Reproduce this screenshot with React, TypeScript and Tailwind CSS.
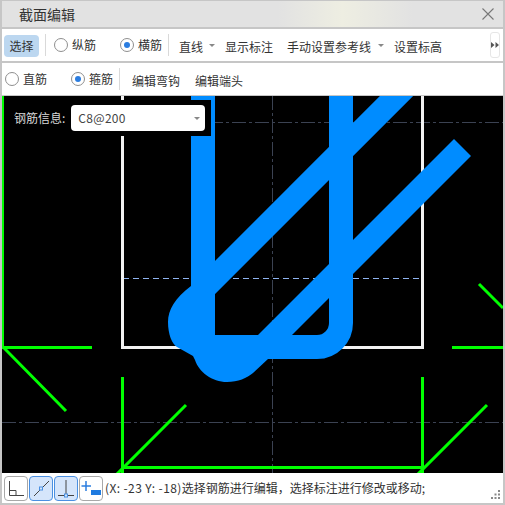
import React from "react";

const font = { fontFamily: '"Noto Sans CJK SC", "Liberation Sans", sans-serif' };

function Radio({ on, label, className = "" }: { on?: boolean; label: string; className?: string }) {
  return (
    <div className={`flex items-center gap-1 ${className}`}>
      <span className="flex h-[14px] w-[14px] items-center justify-center rounded-full border border-[#8f8f8f] bg-white">
        {on && <span className="h-[6px] w-[6px] rounded-full bg-[#2b7de0]" />}
      </span>
      <span className="text-[12px] text-[#333]">{label}</span>
    </div>
  );
}

const Sep = ({ className = "" }: { className?: string }) => <span className={`h-[22px] w-px bg-[#d9d9d9] ${className}`} />;
const Caret = ({ className = "" }: { className?: string }) => (
  <span className={`h-0 w-0 border-x-[3px] border-t-[3px] border-x-transparent border-t-[#888] ${className}`} />
);

function Canvas() {
  const green = "#00ff00";
  const blue = "#008cff";
  return (
    <svg viewBox="2 96 501 377" className="block h-full w-full" shapeRendering="crispEdges">
      <rect x="2" y="96" width="501" height="377" fill="#000" />
      <g stroke="#3b4252" strokeWidth="1" strokeDasharray="14 3 3 3" fill="none">
        <path d="M2 122.500H503" />
        <path d="M2 422.500H503" />
        <path d="M272.500 96V473" />
      </g>
      <path d="M123 278.500H423" stroke="#8fb4f0" strokeWidth="1" strokeDasharray="6 4" />
      <path d="M122.500 96V347.500H423M422.500 96V349" stroke="#f2f2f2" strokeWidth="3" fill="none" />
      <g stroke={green} fill="none">
        <path d="M3 96V347" strokeWidth="2" />
        <path d="M2 347.500H92M452 347.500H503M122.500 377V473M422.500 377V473M122 467.500H424" strokeWidth="3" />
        <path d="M3 347L66 411M479 284L503 308M186 405L116 475M487 405L417 475" strokeWidth="3" shapeRendering="auto" />
      </g>
      <g stroke={blue} fill="none" shapeRendering="auto">
        <path d="M203 96V335" strokeWidth="24" />
        <path d="M341 96V323A24 24 0 0 1 317 347H203" strokeWidth="24" />
        <path d="M205 287.500L425 67.500" strokeWidth="23.500" />
        <path d="M260 350L462.500 147.500" strokeWidth="24" />
        <path
          d="M191 286C175 298 168 310 168 322C168 334 172 344 177 347L193 356L195 360C199 372 212 382 227 382C238 382 247 378 253 373L268 359L258 335L215 335L215 295Z"
          fill={blue}
          stroke="none"
        />
      </g>
    </svg>
  );
}

function IconButton({ active, children }: { active?: boolean; children: React.ReactNode }) {
  return (
    <span
      className={`flex h-[25px] w-[24px] items-center justify-center rounded-[4px] border ${
        active ? "border-[#4a90e2] bg-[#d5e5fb]" : "border-[#a8a8a8] bg-white"
      }`}
    >
      <svg viewBox="0 0 22 23" className="h-[23px] w-[22px]" fill="none" stroke="#444" strokeWidth="1">
        {children}
      </svg>
    </span>
  );
}

export default function App() {
  return (
    <div style={font} className="flex h-[505px] w-[505px] flex-col overflow-hidden border-2 border-t-[1px] border-[#c6c6c6] bg-white">
      <div className="flex h-[28px] shrink-0 items-center justify-between border-b-2 border-[#c6c6c6] bg-[linear-gradient(90deg,#e2e2e2_0%,#e2e2e2_55%,#eeeee2_68%,#e2e2e2_82%,#e2e2e2_100%)] pl-[17px] pr-[9px]">
        <span className="text-[14px] text-[#333]">截面编辑</span>
        <svg viewBox="0 0 12 12" className="h-[12px] w-[12px]" stroke="#777" strokeWidth="1.1">
          <path d="M0.500 0.500L11.500 11.500M11.500 0.500L0.500 11.500" />
        </svg>
      </div>

      <div className="flex h-[34px] shrink-0 items-center border-b-2 border-[#c6c6c6] pl-[2px] pr-[3px]">
        <span className="mt-[2px] flex h-[22px] w-[35px] items-center justify-center rounded-[4px] bg-[#bcd7f0] text-[12px] text-[#333]">选择</span>
        <Sep className="ml-[6px]" />
        <Radio on={false} label="纵筋" className="ml-[8px]" />
        <Radio on label="横筋" className="ml-[24px]" />
        <Sep className="ml-[6px]" />
        <span className="ml-[10px] mt-[3px] text-[12px] text-[#333]">直线</span>
        <Caret className="ml-[6px]" />
        <span className="ml-[10px] mt-[3px] text-[12px] text-[#333]">显示标注</span>
        <span className="ml-[14px] mt-[3px] text-[12px] text-[#333]">手动设置参考线</span>
        <Caret className="ml-[7px]" />
        <span className="ml-[10px] mt-[3px] text-[12px] text-[#333]">设置标高</span>
        <span className="ml-auto flex h-[26px] w-[10px] items-center justify-center rounded-[3px] border border-[#e6e6e6]">
          <svg viewBox="0 0 8 6" className="h-[6px] w-[8px]" fill="#555">
            <path d="M0 0L3.500 3L0 6ZM4.500 0L8 3L4.500 6Z" />
          </svg>
        </span>
      </div>

      <div className="flex h-[33px] shrink-0 items-center border-b border-[#c6c6c6] pb-px pl-[3px]">
        <Radio label="直筋" />
        <Radio on label="箍筋" className="ml-[24px]" />
        <Sep className="ml-[6px]" />
        <span className="ml-[12px] mt-[4px] text-[12px] text-[#333]">编辑弯钩</span>
        <span className="ml-[15px] mt-[4px] text-[12px] text-[#333]">编辑端头</span>
      </div>

      <div className="relative min-h-0 flex-1 bg-black">
        <Canvas />
        <div className="absolute left-[2px] top-[4px] flex h-[36px] w-[207px] items-center bg-black pl-[10px]">
          <span className="text-[12px] text-[#d8d8d8]">钢筋信息:</span>
          <div className="ml-[6px] flex h-[26px] w-[134px] items-center justify-between rounded-[4px] bg-white pl-[7px] pr-[5px]">
            <span className="text-[12px] tracking-[0.3px] text-[#444]">C8@200</span>
            <Caret />
          </div>
        </div>
      </div>

      <div className="relative flex h-[30px] shrink-0 items-center gap-px pl-[2px]">
        <IconButton>
          <path d="M4.500 4V18.500H19M4.500 13.500H11V18.500" />
        </IconButton>
        <IconButton active>
          <path d="M4 19L19 4" />
          <rect x="9.500" y="10" width="3" height="3" fill="#d5e5fb" stroke="#4a90e2" />
        </IconButton>
        <IconButton active>
          <path d="M11 3V17M3 18.500H19" />
          <rect x="9.500" y="17" width="3" height="3" fill="#d5e5fb" stroke="#4a90e2" />
        </IconButton>
        <IconButton>
          <path d="M6 4V14M1.500 9H11" stroke="#2b7de0" strokeWidth="1.500" />
          <rect x="11" y="13" width="10" height="5" fill="#1f7be0" stroke="none" />
        </IconButton>
        <span className="ml-px whitespace-nowrap text-[12px] text-[#333]">
          <span className="tracking-[0.4px]">(X: -23 Y: -18)</span>
          {"选择钢筋进行编辑\uFF0C选择标注进行修改或移动;"}
        </span>
        <svg viewBox="0 0 10 10" className="absolute bottom-[3px] right-[2px] h-[10px] w-[10px]" fill="#888">
          <rect x="7" y="0" width="2" height="2" />
          <rect x="3.500" y="3.500" width="2" height="2" />
          <rect x="7" y="3.500" width="2" height="2" />
          <rect x="0" y="7" width="2" height="2" />
          <rect x="3.500" y="7" width="2" height="2" />
          <rect x="7" y="7" width="2" height="2" />
        </svg>
      </div>
    </div>
  );
}
